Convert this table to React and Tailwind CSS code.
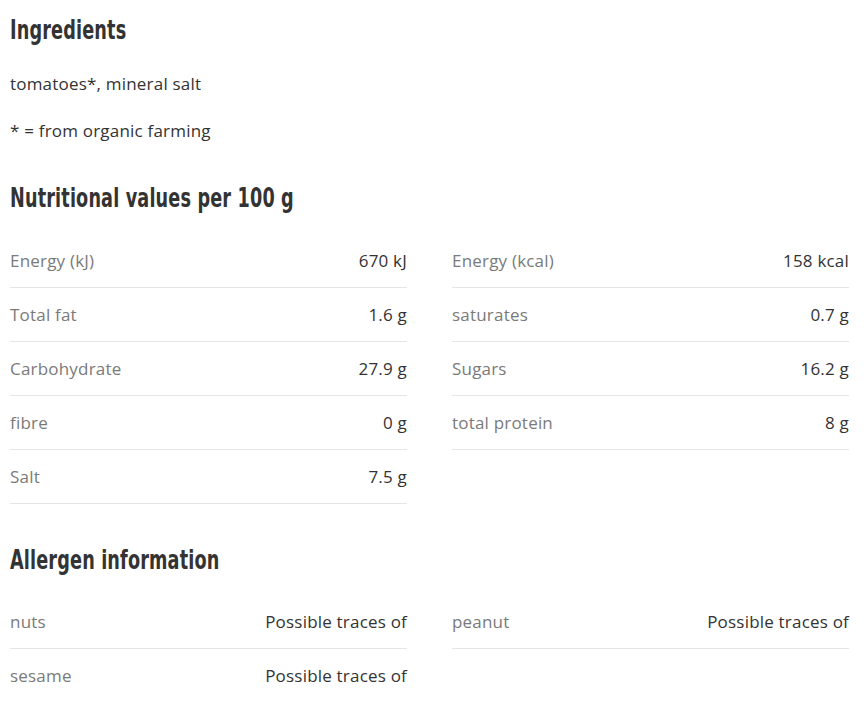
import React from 'react';

const heading = "inline-block origin-left scale-x-[0.755] font-['DejaVu_Sans_Condensed','DejaVu_Sans',sans-serif] font-bold text-[26px] leading-[30px] text-[#333] whitespace-nowrap";
const body = "font-['Open_Sans','Noto_Sans',sans-serif]";

const nutrition = [
  [['Energy (kJ)', '670 kJ'], ['Energy (kcal)', '158 kcal']],
  [['Total fat', '1.6 g'], ['saturates', '0.7 g']],
  [['Carbohydrate', '27.9 g'], ['Sugars', '16.2 g']],
  [['fibre', '0 g'], ['total protein', '8 g']],
  [['Salt', '7.5 g'], null],
];

const allergens = [
  [['nuts', 'Possible traces of'], ['peanut', 'Possible traces of']],
  [['sesame', 'Possible traces of'], null],
];

function Row({ item }) {
  if (!item) return <div />;
  return (
    <div className="flex items-center justify-between h-[54px] border-b border-[#e6e6e6]">
      <span className="text-[#7a7a7a]">{item[0]}</span>
      <span className="text-[#333]">{item[1]}</span>
    </div>
  );
}

function Table({ rows, className }) {
  return (
    <div className={`grid grid-cols-2 gap-x-[45px] ${className}`}>
      {rows.map((r, i) => (
        <React.Fragment key={i}>
          <Row item={r[0]} />
          <Row item={r[1]} />
        </React.Fragment>
      ))}
    </div>
  );
}

export default function App() {
  return (
    <div className={`bg-white w-[867px] h-[702px] pl-[10px] pr-[18px] pt-[15px] text-[17px] tracking-[0.2px] ${body}`}>
      <div className="h-[30px]"><h2 className={heading}>Ingredients</h2></div>
      <p className="mt-[27px] leading-[24px] text-[#333]">tomatoes*, mineral salt</p>
      <p className="mt-[23px] leading-[24px] text-[#333]">* = from organic farming</p>

      <div className="h-[30px] mt-[40px]"><h2 className={heading}>Nutritional values per 100 g</h2></div>
      <Table rows={nutrition} className="mt-[21px]" />

      <div className="h-[30px] mt-[41px]"><h2 className={heading}>Allergen information</h2></div>
      <Table rows={allergens} className="mt-[20px]" />
    </div>
  );
}
